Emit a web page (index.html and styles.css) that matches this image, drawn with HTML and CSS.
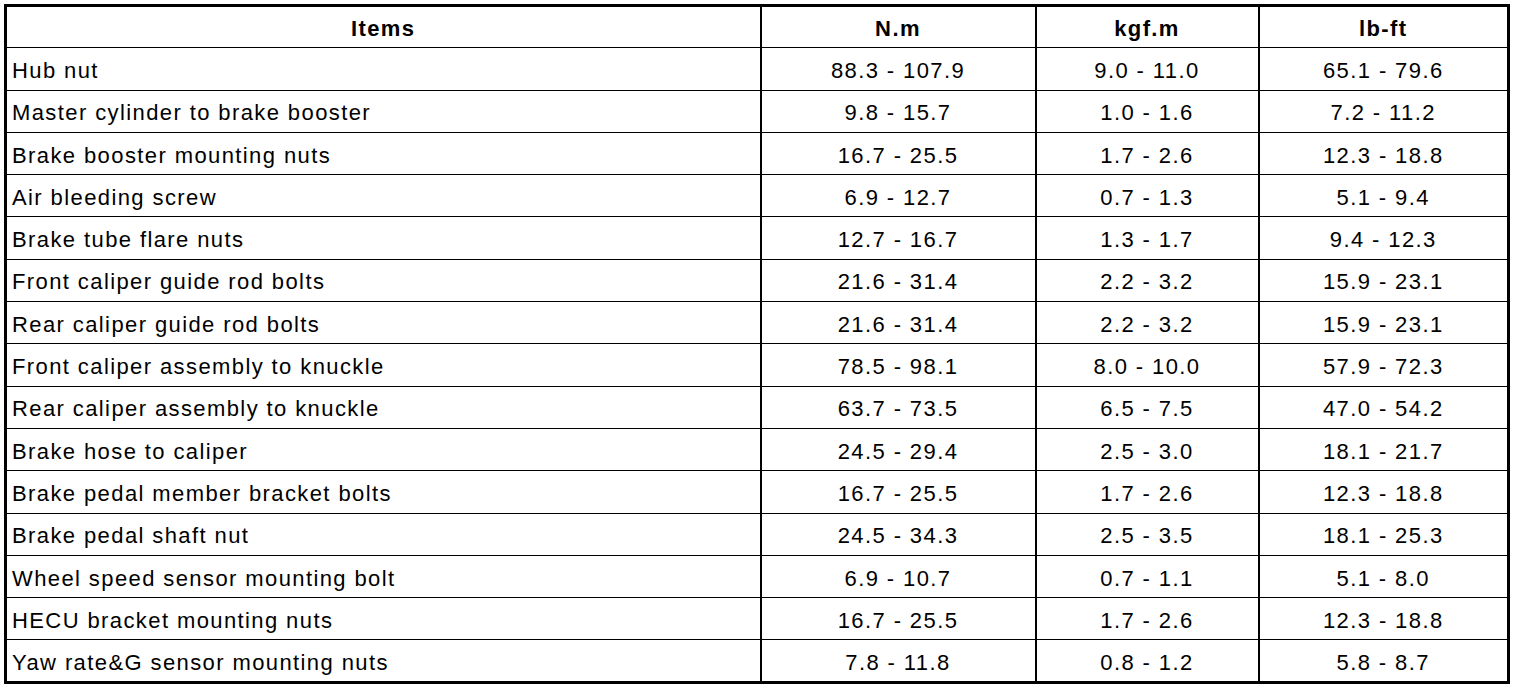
FILE: index.html
```html
<!DOCTYPE html>
<html>
<head>
<meta charset="utf-8">
<link rel="stylesheet" href="styles.css">
</head>
<body>
<table class="spec">
  <colgroup>
    <col class="c-item"><col class="c-nm"><col class="c-kgf"><col class="c-lb">
  </colgroup>
  <thead>
    <tr><th>Items</th><th>N.m</th><th>kgf.m</th><th>lb-ft</th></tr>
  </thead>
  <tbody>
    <tr><td>Hub nut</td><td>88.3 - 107.9</td><td>9.0 - 11.0</td><td>65.1 - 79.6</td></tr>
    <tr><td>Master cylinder to brake booster</td><td>9.8 - 15.7</td><td>1.0 - 1.6</td><td>7.2 - 11.2</td></tr>
    <tr><td>Brake booster mounting nuts</td><td>16.7 - 25.5</td><td>1.7 - 2.6</td><td>12.3 - 18.8</td></tr>
    <tr><td>Air bleeding screw</td><td>6.9 - 12.7</td><td>0.7 - 1.3</td><td>5.1 - 9.4</td></tr>
    <tr><td>Brake tube flare nuts</td><td>12.7 - 16.7</td><td>1.3 - 1.7</td><td>9.4 - 12.3</td></tr>
    <tr><td>Front caliper guide rod bolts</td><td>21.6 - 31.4</td><td>2.2 - 3.2</td><td>15.9 - 23.1</td></tr>
    <tr><td>Rear caliper guide rod bolts</td><td>21.6 - 31.4</td><td>2.2 - 3.2</td><td>15.9 - 23.1</td></tr>
    <tr><td>Front caliper assembly to knuckle</td><td>78.5 - 98.1</td><td>8.0 - 10.0</td><td>57.9 - 72.3</td></tr>
    <tr><td>Rear caliper assembly to knuckle</td><td>63.7 - 73.5</td><td>6.5 - 7.5</td><td>47.0 - 54.2</td></tr>
    <tr><td>Brake hose to caliper</td><td>24.5 - 29.4</td><td>2.5 - 3.0</td><td>18.1 - 21.7</td></tr>
    <tr><td>Brake pedal member bracket bolts</td><td>16.7 - 25.5</td><td>1.7 - 2.6</td><td>12.3 - 18.8</td></tr>
    <tr><td>Brake pedal shaft nut</td><td>24.5 - 34.3</td><td>2.5 - 3.5</td><td>18.1 - 25.3</td></tr>
    <tr><td>Wheel speed sensor mounting bolt</td><td>6.9 - 10.7</td><td>0.7 - 1.1</td><td>5.1 - 8.0</td></tr>
    <tr><td>HECU bracket mounting nuts</td><td>16.7 - 25.5</td><td>1.7 - 2.6</td><td>12.3 - 18.8</td></tr>
    <tr><td>Yaw rate&amp;G sensor mounting nuts</td><td>7.8 - 11.8</td><td>0.8 - 1.2</td><td>5.8 - 8.7</td></tr>
  </tbody>
</table>
</body>
</html>
```
FILE: styles.css
```css
html, body {
  margin: 0;
  padding: 0;
  background: #fff;
}
body {
  padding: 4px 0 0 4px;
  font-family: "Liberation Sans", Arial, sans-serif;
  color: #000;
}
.spec {
  border-collapse: collapse;
  table-layout: fixed;
  width: 1503px;
  border: 3px solid #000;
  font-size: 22px;
  letter-spacing: 1.4px;
}
.spec tr {
  height: 42.3px;
}
.c-item { width: 755px; }
.c-nm { width: 275px; }
.c-kgf { width: 223px; }
.c-lb { width: 250px; }
.spec th, .spec td {
  border-left: 2px solid #000;
  border-top: 1px solid #000;
  padding: 4px 5px 0;
  text-align: center;
  vertical-align: middle;
  white-space: nowrap;
}
.spec th {
  font-weight: bold;
  border-top: none;
}
.spec td:first-child {
  text-align: left;
}
.spec th:first-child, .spec td:first-child {
  border-left: none;
}
```
